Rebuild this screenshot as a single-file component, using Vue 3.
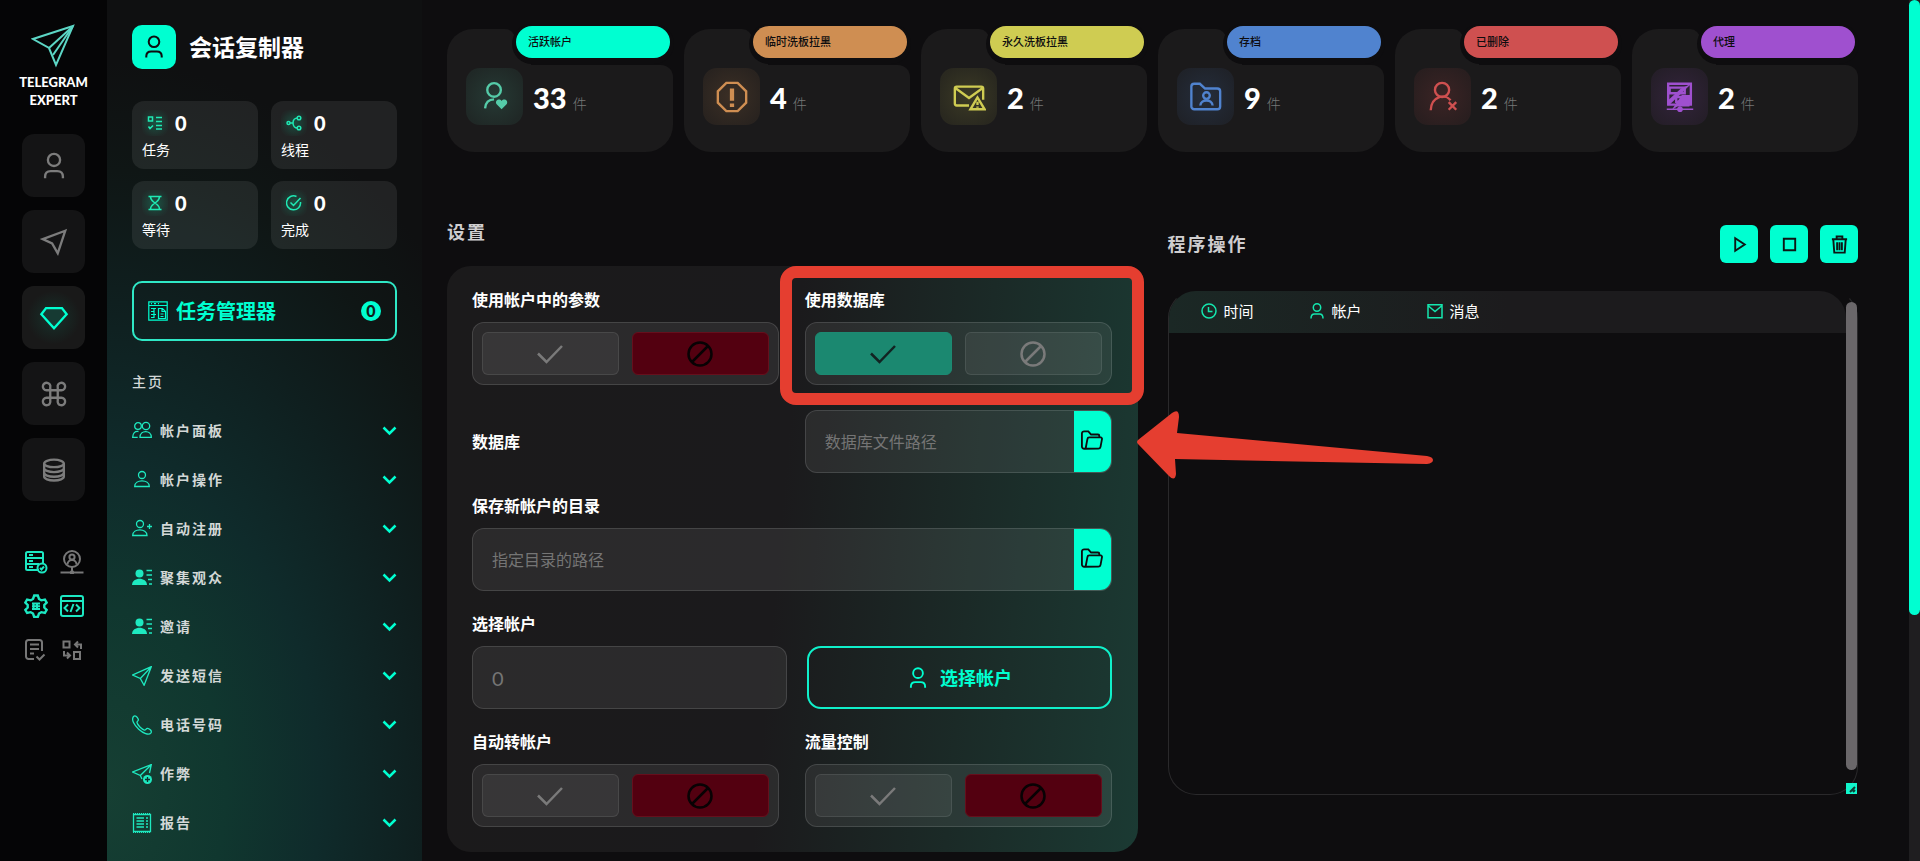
<template>
  <div class="layout">
    <nav class="rail" aria-label="模块">
      <a class="brand" href="#">
        <svg class="brand__logo" viewBox="0 0 44 44" aria-hidden="true" v-html="icons.logo" />
        <span class="brand__name">TELEGRAM<br />EXPERT</span>
      </a>
      <div class="rail__main">
        <button
          v-for="item in railItems"
          :key="item.icon"
          type="button"
          class="rail__btn"
          :class="{ 'rail__btn--active': activeRail === item.icon }"
          :aria-label="item.label"
          @click="activeRail = item.icon"
        >
          <svg viewBox="0 0 32 32" aria-hidden="true" v-html="icons[item.icon]" />
        </button>
      </div>
      <div class="rail__tools">
        <button
          v-for="tool in tools"
          :key="tool.icon"
          type="button"
          class="tool"
          :class="{ 'tool--on': tool.on }"
          :aria-label="tool.label"
        >
          <svg viewBox="0 0 24 24" aria-hidden="true" v-html="icons[tool.icon]" />
        </button>
      </div>
    </nav>

    <aside class="sidebar">
      <header class="sidebar__head">
        <span class="sidebar__icon">
          <svg viewBox="0 0 32 32" aria-hidden="true" v-html="icons.user" />
        </span>
        <h1 class="sidebar__title">会话复制器</h1>
      </header>

      <div class="counters">
        <div v-for="counter in counters" :key="counter.label" class="counter">
          <div class="counter__top">
            <span class="counter__icon">
              <svg viewBox="0 0 16 16" aria-hidden="true" v-html="icons[counter.icon]" />
            </span>
            <span class="counter__value">{{ counter.value }}</span>
          </div>
          <span class="counter__label">{{ counter.label }}</span>
        </div>
      </div>

      <button type="button" class="task-manager">
        <svg viewBox="0 0 20 20" aria-hidden="true" v-html="icons.manager" />
        <span>任务管理器</span>
        <span class="task-manager__badge">0</span>
      </button>

      <a class="home-link" href="#">主页</a>
      <ul class="menu">
        <li v-for="item in menu" :key="item.label">
          <button type="button" class="menu__item">
            <svg class="menu__icon" viewBox="0 0 20 20" aria-hidden="true" v-html="icons[item.icon]" />
            <span>{{ item.label }}</span>
            <svg class="menu__chevron" viewBox="0 0 15 10" aria-hidden="true">
              <path d="M1.500 1.500l6 6 6-6" />
            </svg>
          </button>
        </li>
      </ul>
    </aside>

    <main class="content">
      <section class="stats">
        <article v-for="stat in stats" :key="stat.label" class="stat" :style="{ '--tone': stat.color, '--ink': stat.ink }">
          <span class="stat__label">{{ stat.label }}</span>
          <div class="stat__body">
            <span class="stat__icon">
              <svg viewBox="0 0 36 36" aria-hidden="true" v-html="icons[stat.icon]" />
            </span>
            <p class="stat__text">
              <strong class="stat__value">{{ stat.value }}</strong>
              <span class="stat__unit">件</span>
            </p>
          </div>
        </article>
      </section>

      <div class="columns">
        <section class="settings">
          <h2 class="section-title">设置</h2>
          <form class="card" @submit.prevent>
            <div class="row">
              <div class="field">
                <span class="field__label">使用帐户中的参数</span>
                <div class="switch" role="group" aria-label="使用帐户中的参数">
                  <button type="button" class="switch__btn switch__btn--yes" :class="{ active: form.params }" aria-label="是" :aria-pressed="form.params" @click="form.params = true">
                    <svg viewBox="0 0 28 28" aria-hidden="true" v-html="icons.check" />
                  </button>
                  <button type="button" class="switch__btn switch__btn--no" :class="{ active: !form.params }" aria-label="否" :aria-pressed="!form.params" @click="form.params = false">
                    <svg viewBox="0 0 28 28" aria-hidden="true" v-html="icons.ban" />
                  </button>
                </div>
              </div>
              <div class="field field--marked">
                <span class="field__label">使用数据库</span>
                <div class="switch" role="group" aria-label="使用数据库">
                  <button type="button" class="switch__btn switch__btn--yes" :class="{ active: form.database }" aria-label="是" :aria-pressed="form.database" @click="form.database = true">
                    <svg viewBox="0 0 28 28" aria-hidden="true" v-html="icons.check" />
                  </button>
                  <button type="button" class="switch__btn switch__btn--no" :class="{ active: !form.database }" aria-label="否" :aria-pressed="!form.database" @click="form.database = false">
                    <svg viewBox="0 0 28 28" aria-hidden="true" v-html="icons.ban" />
                  </button>
                </div>
              </div>
            </div>

            <div class="row row--inline">
              <label class="field__label" for="db-path">数据库</label>
              <div class="path">
                <input id="db-path" v-model="form.dbPath" type="text" placeholder="数据库文件路径" />
                <button type="button" aria-label="选择数据库文件">
                  <svg viewBox="0 0 24 24" aria-hidden="true" v-html="icons.open" />
                </button>
              </div>
              <svg class="pointer" viewBox="0 0 302 72" aria-hidden="true">
                <path d="M3 30Q1 32 3 34L34 66Q40 72 41 64L40 49L292 54Q298 53 298 50T292 46L42 23L44 7Q44-2 37 3Z" />
              </svg>
            </div>

            <div class="field">
              <label class="field__label" for="save-path">保存新帐户的目录</label>
              <div class="path">
                <input id="save-path" v-model="form.savePath" type="text" placeholder="指定目录的路径" />
                <button type="button" aria-label="选择目录">
                  <svg viewBox="0 0 24 24" aria-hidden="true" v-html="icons.open" />
                </button>
              </div>
            </div>

            <div class="field">
              <label class="field__label" for="accounts">选择帐户</label>
              <div class="picker">
                <input id="accounts" v-model="form.accounts" class="picker__input" type="text" placeholder="0" />
                <button type="button" class="picker__btn">
                  <svg viewBox="0 0 32 32" aria-hidden="true" v-html="icons.user" />
                  选择帐户
                </button>
              </div>
            </div>

            <div class="row">
              <div class="field">
                <span class="field__label">自动转帐户</span>
                <div class="switch" role="group" aria-label="自动转帐户">
                  <button type="button" class="switch__btn switch__btn--yes" :class="{ active: form.auto }" aria-label="是" :aria-pressed="form.auto" @click="form.auto = true">
                    <svg viewBox="0 0 28 28" aria-hidden="true" v-html="icons.check" />
                  </button>
                  <button type="button" class="switch__btn switch__btn--no" :class="{ active: !form.auto }" aria-label="否" :aria-pressed="!form.auto" @click="form.auto = false">
                    <svg viewBox="0 0 28 28" aria-hidden="true" v-html="icons.ban" />
                  </button>
                </div>
              </div>
              <div class="field">
                <span class="field__label">流量控制</span>
                <div class="switch" role="group" aria-label="流量控制">
                  <button type="button" class="switch__btn switch__btn--yes" :class="{ active: form.flow }" aria-label="是" :aria-pressed="form.flow" @click="form.flow = true">
                    <svg viewBox="0 0 28 28" aria-hidden="true" v-html="icons.check" />
                  </button>
                  <button type="button" class="switch__btn switch__btn--no" :class="{ active: !form.flow }" aria-label="否" :aria-pressed="!form.flow" @click="form.flow = false">
                    <svg viewBox="0 0 28 28" aria-hidden="true" v-html="icons.ban" />
                  </button>
                </div>
              </div>
            </div>
          </form>
        </section>

        <section class="log">
          <header class="log__head">
            <h2 class="section-title">程序操作</h2>
            <div class="log__actions">
              <button v-for="action in actions" :key="action.icon" type="button" :aria-label="action.label">
                <svg viewBox="0 0 20 20" aria-hidden="true" v-html="icons[action.icon]" />
              </button>
            </div>
          </header>
          <div class="log__panel">
            <table class="log__table">
              <thead>
                <tr>
                  <th v-for="col in columns" :key="col.label" scope="col">
                    <span class="log__cell">
                      <svg viewBox="0 0 16 16" aria-hidden="true" v-html="icons[col.icon]" />
                      {{ col.label }}
                    </span>
                  </th>
                </tr>
              </thead>
            </table>
            <div class="log__side" aria-hidden="true">
              <div class="log__thumb"></div>
              <svg class="log__grip" viewBox="0 0 11 11">
                <path d="M4 9l5-5M7 9l2-2" />
              </svg>
            </div>
          </div>
        </section>
      </div>
    </main>

    <div class="scrollbar" aria-hidden="true">
      <div class="scrollbar__thumb"></div>
    </div>
  </div>
</template>

<script setup>
import { reactive, ref } from 'vue'

const icons = {
  logo: '<path d="M42 2L2 15l16 9 7 17z"/><path d="M18 24L40 4"/><path d="M42 2L22 31"/>',
  user: '<circle cx="16" cy="9.500" r="6.500"/><path d="M6.500 29v-1.500c0-4 2.500-6 6-6h7c3.500 0 6 2 6 6V29"/>',
  plane: '<path d="M28 4L4 13l10 4.500L20 28z"/>',
  diamond: '<path d="M7.500 5.500h17l5 6.500L16 27 2.500 12z"/>',
  command: '<path d="M12 12h8v8h-8zM12 12V9a4 4 0 1 0-4 3zM20 12V9a4 4 0 1 1 4 3zM12 20v3a4 4 0 1 1-4-3zM20 20v3a4 4 0 1 0 4-3z"/>',
  database: '<ellipse cx="16" cy="9" rx="10.500" ry="4"/><path d="M5.500 9v14c0 2.300 4.500 4.200 10.500 4.200s10.500-1.900 10.500-4.200V9M5.500 14c0 2.300 4.500 4.200 10.500 4.200s10.500-1.900 10.500-4.200M5.500 19c0 2.300 4.500 4.200 10.500 4.200s10.500-1.900 10.500-4.200"/>',
  server: '<path d="M15 20H3.500a1.500 1.500 0 0 1-1.500-1.500v-15A1.500 1.500 0 0 1 3.500 2h14A1.500 1.500 0 0 1 19 3.500V13M2 8h17M2 14h13M5 5h4M5 11h4M5 17h4"/><circle cx="18" cy="18" r="4.500"/><path d="M16 18l1.500 1.500 2.500-3"/>',
  proxyUser: '<circle cx="12" cy="9" r="8"/><circle cx="12" cy="7" r="2.600"/><path d="M7.500 14.500c0-6 9-6 9 0M12 17v5M0.500 22.500h23"/><circle cx="12" cy="22.500" r="1.200"/>',
  gear: '<path stroke-width="2.400" d="M9 5l1.200-3.500h3.600L15 5l2.300 1.300 3.600-.8 1.800 3.100L20.300 11v2.500l2.400 2.400-1.800 3.100-3.600-.8L15 19.500 13.800 23h-3.600L9 19.500l-2.300-1.300-3.600.8-1.800-3.100 2.400-2.400V11L1.300 8.600l1.800-3.100 3.600.8z"/><path d="M8 9.500h8M8 12.200h8M8 15h8M9.500 9v6.500M13 9v6.500"/>',
  code: '<rect x="1" y="2" width="22" height="20" rx="2"/><path d="M1 7h22M8 10.500L4.500 14 8 17.500M16 10.500l3.500 3.500-3.500 3.500M13.500 10l-3 8"/>',
  docCheck: '<path d="M10 21H4.500A2.500 2.500 0 0 1 2 18.500v-14A2.500 2.500 0 0 1 4.500 2h11A2.500 2.500 0 0 1 18 4.500V13M6 6.500h9M6 11h9M6 15.500h4M12.500 18.500l3 3 5-5"/>',
  swap: '<path d="M3.500 3.500h6v6h-6zM14 14h6v7h-6zM15 6.500h6v4.500M18 3.500l-3 3 3 3M4 13v4.500h5.500M7 14.500l3 3-3 3"/>',
  tasks: '<path d="M1.500 2h4v4h-4zM9 2.500h6M9 6.500h6M9 10.500h6M9 14h6M1.500 11.500l1.500 2 3-3"/>',
  threads: '<circle cx="2.500" cy="8" r="1.500"/><circle cx="13" cy="3" r="1.800"/><circle cx="13" cy="13" r="1.800"/><path d="M4 8h3M11.500 3C9 3 7 5 7 8s2 5 4.500 5"/>',
  hourglass: '<path d="M1.500 1.500h13M1.500 14.500h13M3.500 1.500c0 4 2 4.500 4.500 6.500 2.500-2 4.500-2.500 4.500-6.500M3.500 14.500c0-4 2-4.500 4.500-6.500 2.500 2 4.500 2.500 4.500 6.500"/>',
  done: '<path d="M14.500 7a7 7 0 1 1-4-5.500M4.500 7.500L7.500 10.500l7-7.500"/>',
  manager: '<path d="M.8.800h18.400v18.400H.800zM.800 4.500h18.400M3 2.700h1M6 2.700h2M10 2.700h1"/><path d="M3 7.500h5M3 10.500h3M3 13.500h5M3 16.500h3M6 8v9M10.500 7.500h4l3 3v7h-7zM14 7.500v3h3M12.500 13h3M12.500 15.500h3"/>',
  group: '<circle cx="6" cy="5" r="3.300"/><circle cx="14" cy="5" r="3.700"/><path d="M6.500 10.500C3 10 .7 12 .7 16.300h5M8 16.300c0-7.600 11.300-7.600 11.300 0z"/>',
  person: '<circle cx="10" cy="5" r="3.500"/><path d="M2.700 16.500c0-7.500 14.600-7.500 14.600 0z"/>',
  personAdd: '<circle cx="8" cy="5" r="3.500"/><path d="M.7 16.500c0-7.500 14.300-7.500 14.300 0zM15 7.500h5M17.500 5v5"/>',
  audience: '<g class="solid"><circle cx="7.500" cy="5.500" r="4"/><path d="M0 17c0-8.500 15-8.500 15 0z"/></g><path d="M14.500 2.500H20M14.500 7H20M16 11.500h4M17 16h3"/>',
  send: '<path d="M19.300.700L.7 9l7.600 3.500 3.800 6.800zM8.300 12.500l11-11.800"/>',
  phone: '<path d="M1.500 1.500c2-2 4 1 4.800 2.800.5 1.500-1.600 2-1.300 3.200.6 3 5.300 7 7.500 7.600 1.300.3 1.500-2 3.200-1.700 2 .5 4.500 2.400 3.300 4.400C14.500 23.500-3.500 8 1.500 1.500z"/>',
  boost: '<path d="M19.300.700L.7 8l7.600 3.500L10 15M8.300 11.500l11-10.800L17.500 9"/><circle class="solid" cx="15.500" cy="15.500" r="4.500"/><path class="cut" d="M13 15.500h5M15.500 13v5"/>',
  report: '<path d="M1.500 1.500h17v17h-17z"/><path stroke-dasharray="1 1" d="M1 .500h18M1 19.500h18"/><path d="M4.500 5H12M4.500 8H12M4.500 11H12M4.500 14H12M14 5h2M14 8h2M14 11h2M14 14h2"/>',
  userHeart: '<circle cx="17" cy="10.500" r="7.200"/><path d="M7.500 30c.5-6 4-9.500 9.500-9.500"/><path class="solid" d="M25 31l-5.500-5.500c-2-4 3.200-6.500 5.500-3.300 2.300-3.200 7.500-.7 5.500 3.300z"/>',
  octagon: '<path d="M12 3h12l9 9v12l-9 9H12l-9-9V12z"/><path stroke-width="4.500" d="M18 9v13M18 25v3.500"/>',
  mailWarn: '<path d="M18 27H5a2 2 0 0 1-2-2V9a2 2 0 0 1 2-2h26a2 2 0 0 1 2 2v12M3.500 8.500L18 19 32.500 8.500"/><path d="M27 18.500L19.500 31h15zM27 23v3.500M27 28v1.500"/>',
  folderUser: '<path d="M2.500 28V7a3 3 0 0 1 3-3h6l5.500 5h13a3 3 0 0 1 3 3v16a3 3 0 0 1-3 3H5.500a3 3 0 0 1-3-3z"/><circle cx="18.500" cy="16.500" r="3.500"/><path d="M12 27c.5-7 12.500-7 13 0"/>',
  userX: '<circle cx="17" cy="10.500" r="7.500"/><path d="M5 32c.5-15 15-18 21-10.500M24 23.500l8 8M32 23.500l-8 8"/>',
  proxy: '<path d="M5.500 4h24v22h-24z"/><path d="M7 8h16v6H7zM14 18h14v5H14z"/><path class="solid" d="M30 4L6 27v-6l13-12zM20 16h10l-2 12H15l-6 4z"/><path d="M4 31h28M18 28v5" stroke-width="1.500"/><circle class="solid" cx="18" cy="31" r="3"/>',
  check: '<path d="M2 13.500L10.500 22 26 6"/>',
  ban: '<circle cx="14" cy="14" r="11.500"/><path d="M6 22L22 6"/>',
  open: '<path d="M5 21.500H3.500A2.500 2.500 0 0 1 1 19V5a2.500 2.500 0 0 1 2.500-2.500H8L11 6h7.500A1.500 1.500 0 0 1 20 7.500V9M5 21.500L7 11a2 2 0 0 1 2-1.800h12.500a1.500 1.500 0 0 1 1.400 1.800l-1.600 8.500a2.500 2.500 0 0 1-2.400 2z"/>',
  play: '<path d="M5.500 3.500v13L15.500 10z"/>',
  stop: '<path d="M4 4h12v12H4z"/>',
  trash: '<path d="M2 4.500h16M7 4V1.500h6V4M3.500 5l1 13.500h11l1-13.500M7.500 7.500v8.500M10 7.500v8.500M12.500 7.500v8.500"/>',
  clock: '<circle cx="8" cy="8" r="7"/><path d="M7.500 4v4.500h4"/>',
  account: '<circle cx="8" cy="4.500" r="3.700"/><path d="M2 15.500c0-3.500 1.500-4.500 3.500-4.500h5c2 0 3.500 1 3.500 4.500"/>',
  mail: '<path d="M1 1.800h14v13H1zM1.500 3L8 8.500 14.500 3"/>',
}

const activeRail = ref('diamond')
const railItems = [
  { icon: 'user', label: '帐户' },
  { icon: 'plane', label: '发送' },
  { icon: 'diamond', label: '高级' },
  { icon: 'command', label: '命令' },
  { icon: 'database', label: '数据' },
]

const tools = [
  { icon: 'server', label: '服务器', on: true },
  { icon: 'proxyUser', label: '代理', on: false },
  { icon: 'gear', label: '参数', on: true },
  { icon: 'code', label: '代码', on: true },
  { icon: 'docCheck', label: '文档', on: false },
  { icon: 'swap', label: '转换', on: false },
]

const counters = [
  { icon: 'tasks', value: 0, label: '任务' },
  { icon: 'threads', value: 0, label: '线程' },
  { icon: 'hourglass', value: 0, label: '等待' },
  { icon: 'done', value: 0, label: '完成' },
]

const menu = [
  { icon: 'group', label: '帐户面板' },
  { icon: 'person', label: '帐户操作' },
  { icon: 'personAdd', label: '自动注册' },
  { icon: 'audience', label: '聚集观众' },
  { icon: 'audience', label: '邀请' },
  { icon: 'send', label: '发送短信' },
  { icon: 'phone', label: '电话号码' },
  { icon: 'boost', label: '作弊' },
  { icon: 'report', label: '报告' },
]

const stats = [
  { icon: 'userHeart', value: 33, label: '活跃帐户', color: '#00ffd1', ink: '#55cba8' },
  { icon: 'octagon', value: 4, label: '临时洗板拉黑', color: '#cf8e52', ink: '#cf8e52' },
  { icon: 'mailWarn', value: 2, label: '永久洗板拉黑', color: '#cfcc52', ink: '#cfcc52' },
  { icon: 'folderUser', value: 9, label: '存档', color: '#5083cf', ink: '#5083cf' },
  { icon: 'userX', value: 2, label: '已删除', color: '#cf5050', ink: '#cf5050' },
  { icon: 'proxy', value: 2, label: '代理', color: '#9f50cf', ink: '#9f50cf' },
]

const actions = [
  { icon: 'play', label: '开始' },
  { icon: 'stop', label: '停止' },
  { icon: 'trash', label: '清空' },
]

const columns = [
  { icon: 'clock', label: '时间' },
  { icon: 'account', label: '帐户' },
  { icon: 'mail', label: '消息' },
]

const form = reactive({
  params: false,
  database: true,
  dbPath: '',
  savePath: '',
  accounts: '',
  auto: false,
  flow: false,
})
</script>

<style>
body {
  margin: 0;
  background: #0e0d0f;
}
</style>

<style scoped>
.layout {
  --accent: #00ffd1;
  --bg: #0e0d0f;
  display: flex;
  height: 100vh;
  overflow: hidden;
  background: var(--bg);
  color: #fff;
  font-family: Lato, 'Noto Sans CJK SC', sans-serif;
  font-size: 16px;
  line-height: 22px;
}
.layout *,
.layout *::before,
.layout *::after {
  box-sizing: border-box;
}
button {
  margin: 0;
  padding: 0;
  border: none;
  background: none;
  color: inherit;
  font: inherit;
  cursor: pointer;
}
input {
  min-width: 0;
  font: inherit;
}
a {
  color: inherit;
  text-decoration: none;
}
svg {
  display: block;
  flex: none;
  fill: none;
  stroke: currentColor;
  stroke-width: 2;
}
svg :deep(.solid) {
  fill: currentColor;
  stroke: none;
}
svg :deep(.cut) {
  stroke: #10302c;
}

/* Rail */
.rail {
  flex: 0 0 107px;
  display: flex;
  flex-direction: column;
  align-items: center;
  padding-top: 24px;
  background: #050506;
}
.brand {
  display: flex;
  flex-direction: column;
  align-items: center;
  gap: 5px;
  text-align: center;
}
.brand__logo {
  width: 44px;
  height: 44px;
  color: #5cd6c5;
}
.brand__name {
  font-size: 13px;
  line-height: 18px;
  font-weight: 900;
}
.rail__main {
  display: flex;
  flex-direction: column;
  gap: 13px;
  margin-top: 25px;
}
.rail__btn {
  display: grid;
  place-items: center;
  width: 63px;
  height: 63px;
  border-radius: 12px;
  background: #141415;
  color: #7c7c7c;
}
.rail__btn svg {
  width: 30px;
  height: 30px;
  stroke-width: 2.5;
}
.rail__btn--active {
  background: radial-gradient(circle, #17312b 0%, #191919 60%);
  color: var(--accent);
}
.rail__btn--active svg {
  fill: #163a33;
}
.rail__tools {
  display: grid;
  grid-template-columns: 24px 24px;
  gap: 20px 12px;
  margin-top: 49px;
}
.tool {
  color: #777;
}
.tool svg {
  width: 24px;
  height: 24px;
}
.tool--on {
  color: #1ce8c2;
}

/* Sidebar */
.sidebar {
  flex: 0 0 315px;
  padding: 25px 25px 0;
  background: radial-gradient(ellipse 150% 85% at 0% 92%, #163f33 0%, #10372f 25%, #0f2b2b 45%, #0f1f1f 67%, #0f1615 85%, #0f1011 100%);
}
.sidebar__head {
  display: flex;
  align-items: center;
  gap: 13px;
}
.sidebar__icon {
  display: grid;
  place-items: center;
  width: 44px;
  height: 44px;
  border-radius: 10px;
  background: var(--accent);
  color: #0e0d0f;
}
.sidebar__icon svg {
  width: 26px;
  height: 26px;
  stroke-width: 2.5;
}
.sidebar__title {
  margin: 0;
  font-size: 23px;
  line-height: 32px;
  font-weight: 700;
}
.counters {
  display: grid;
  grid-template-columns: 1fr 1fr;
  gap: 12px 13px;
  margin-top: 32px;
}
.counter {
  height: 68px;
  padding: 9px 10px;
  border-radius: 12px;
  background: rgba(255, 255, 255, 0.08);
}
.counter__top {
  display: flex;
  align-items: center;
  gap: 7px;
}
.counter__icon {
  display: grid;
  place-items: center;
  width: 26px;
  height: 26px;
  border-radius: 8px;
  background: radial-gradient(circle, rgba(0, 255, 180, 0.2), rgba(0, 255, 180, 0.02) 75%);
  color: #1fe9b4;
}
.counter__icon svg {
  width: 16px;
  height: 16px;
  stroke-width: 1.5;
}
.counter__value {
  font-size: 20px;
  font-weight: 900;
}
.counter__label {
  display: block;
  margin-top: 4px;
  font-size: 14px;
  line-height: 20px;
}
.task-manager {
  display: flex;
  align-items: center;
  gap: 8px;
  width: 100%;
  height: 60px;
  margin-top: 32px;
  padding: 0 14px;
  border: 2px solid #2fe8c6;
  border-radius: 10px;
  color: var(--accent);
  font-size: 20px;
  font-weight: 700;
}
.task-manager svg {
  width: 20px;
  height: 20px;
  stroke-width: 1.2;
}
.task-manager__badge {
  width: 20px;
  height: 20px;
  margin-left: auto;
  border-radius: 50%;
  background: var(--accent);
  color: #0f1f1c;
  font-size: 16px;
  line-height: 20px;
  font-weight: 900;
}
.home-link {
  display: block;
  margin-top: 30px;
  color: #d3d8d7;
  font-size: 14px;
  font-weight: 500;
  letter-spacing: 2px;
}
.menu {
  display: flex;
  flex-direction: column;
  margin: 13px 0 0;
  padding: 0;
  list-style: none;
}
.menu__item {
  display: flex;
  align-items: center;
  gap: 8px;
  width: 100%;
  height: 49px;
  color: #d3d8d7;
  font-size: 14px;
  font-weight: 700;
  letter-spacing: 2px;
}
.menu__icon {
  width: 20px;
  height: 20px;
  color: #1ee9c0;
  stroke-width: 1.3;
}
.menu__chevron {
  width: 15px;
  height: 10px;
  margin-left: auto;
  color: var(--accent);
  stroke-width: 2.5;
}

/* Stats */
.content {
  flex: 1;
  min-width: 0;
  padding: 29px 51px 0 25px;
}
.stats {
  display: grid;
  grid-template-columns: repeat(6, 1fr);
  gap: 11px;
}
.stat {
  position: relative;
  padding-top: 36px;
}
.stat::before {
  content: '';
  position: absolute;
  top: 0;
  left: 0;
  width: 68px;
  height: 36px;
  border-radius: 26px 10px 0 0;
  background: #1b1a1b;
}
.stat::after {
  content: '';
  position: absolute;
  top: 22px;
  left: 66px;
  width: 18px;
  height: 14px;
  background: #1b1a1b;
}
.stat__label {
  position: absolute;
  z-index: 1;
  top: -3px;
  right: 3px;
  left: 69px;
  height: 32px;
  padding-left: 12px;
  border-radius: 16px;
  background: var(--tone);
  box-shadow: 0 2px 0 4px var(--bg);
  color: #0e0d0f;
  font-size: 11px;
  line-height: 32px;
  font-weight: 500;
}
.stat__body {
  display: flex;
  gap: 10px;
  height: 87px;
  padding: 3px 19px 0;
  border-radius: 0 12px 27px 27px;
  background: #1b1a1b;
}
.stat__icon {
  display: grid;
  place-items: center;
  width: 57px;
  height: 57px;
  border-radius: 14px;
  background: radial-gradient(circle, color-mix(in srgb, var(--ink) 18%, #1b1a1b), color-mix(in srgb, var(--ink) 8%, #1b1a1b) 80%);
  color: var(--ink);
}
.stat__icon svg {
  width: 34px;
  height: 34px;
  stroke-width: 2.5;
}
.stat__text {
  display: flex;
  align-items: baseline;
  gap: 6px;
  margin: 12px 0 0;
}
.stat__value {
  font-size: 29px;
  line-height: 36px;
  font-weight: 900;
}
.stat__unit {
  color: #777;
  font-size: 14px;
  font-weight: 300;
}

/* Columns */
.columns {
  display: grid;
  grid-template-columns: 1fr 1fr;
  align-items: start;
  gap: 30px;
  margin-top: 68px;
}
.section-title {
  margin: 0;
  color: #cfcdcf;
  font-size: 18px;
  line-height: 24px;
  font-weight: 700;
  letter-spacing: 2px;
}

/* Settings */
.card {
  display: flex;
  flex-direction: column;
  gap: 22px;
  margin-top: 22px;
  padding: 23px 26px 25px 25px;
  border-radius: 24px;
  background: linear-gradient(95deg, #1b1a1b 0%, #1b1a1c 48%, #1b2a27 74%, #1b3a33 100%);
}
.row {
  position: relative;
  display: grid;
  grid-template-columns: 1fr 1fr;
  gap: 26px;
}
.row--inline {
  align-items: center;
  margin-top: 3px;
}
.field {
  position: relative;
  display: flex;
  flex-direction: column;
  gap: 11px;
}
.field__label {
  font-size: 16px;
  line-height: 22px;
  font-weight: 700;
}
.field--marked::after {
  content: '';
  position: absolute;
  z-index: 2;
  inset: -23px -32px -20px -25px;
  border: 12px solid #e53e30;
  border-radius: 16px;
  pointer-events: none;
}
.switch {
  display: grid;
  grid-template-columns: 1fr 1fr;
  gap: 13px;
  height: 63px;
  padding: 9px;
  border: 1px solid rgba(255, 255, 255, 0.13);
  border-radius: 12px;
  background: rgba(255, 255, 255, 0.07);
}
.switch__btn {
  display: grid;
  place-items: center;
  border: 1px solid rgba(255, 255, 255, 0.09);
  border-radius: 6px;
  background: rgba(255, 255, 255, 0.06);
  color: #7a7a7a;
}
.switch__btn svg {
  width: 28px;
  height: 28px;
  stroke-width: 2.5;
}
.switch__btn--yes.active {
  border-color: #1c8a72;
  background: #1b8870;
  color: #122322;
}
.switch__btn--no.active {
  border-color: #660f1c;
  background: #530010;
  color: #080204;
}
.path {
  display: flex;
  height: 63px;
  border: 1px solid rgba(255, 255, 255, 0.13);
  border-radius: 12px;
  background: rgba(255, 255, 255, 0.07);
  overflow: hidden;
}
.path input {
  flex: 1;
  padding: 0 19px;
  border: none;
  background: none;
  color: #fff;
}
.path button {
  display: grid;
  place-items: center;
  flex: 0 0 37px;
  padding-bottom: 4px;
  background: var(--accent);
  color: #0e0d0f;
}
.path button svg {
  width: 22px;
  height: 22px;
}
input::placeholder {
  color: #757575;
  opacity: 1;
}
.picker {
  display: grid;
  grid-template-columns: 315fr 305fr;
  gap: 20px;
}
.picker__input {
  height: 63px;
  padding: 0 19px;
  border: 1px solid rgba(255, 255, 255, 0.13);
  border-radius: 12px;
  background: rgba(255, 255, 255, 0.07);
  color: #fff;
  font-size: 20px;
}
.picker__btn {
  display: flex;
  align-items: center;
  justify-content: center;
  gap: 10px;
  height: 63px;
  border: 2px solid #10f0ca;
  border-radius: 14px;
  color: var(--accent);
  font-size: 18px;
  font-weight: 700;
}
.picker__btn svg {
  width: 24px;
  height: 24px;
  stroke-width: 2.5;
}
.pointer {
  position: absolute;
  z-index: 3;
  top: 0;
  left: calc(100% + 23px);
  width: 302px;
  height: 72px;
  fill: #e53e30;
  stroke: none;
  pointer-events: none;
}

/* Log */
.log {
  margin-top: 5px;
}
.log__head {
  display: flex;
  align-items: center;
  justify-content: space-between;
}
.log__actions {
  display: flex;
  gap: 12px;
}
.log__actions button {
  display: grid;
  place-items: center;
  width: 38px;
  height: 38px;
  border-radius: 6px;
  background: var(--accent);
  color: #0d1614;
}
.log__actions svg {
  width: 19px;
  height: 19px;
}
.log__panel {
  display: flex;
  height: 505px;
  margin-top: 27px;
  border: 1px solid #2a292b;
  border-top-color: transparent;
  border-radius: 28px;
}
.log__table {
  flex: 1;
  height: 42px;
  padding-left: 32px;
  border-spacing: 0;
  table-layout: fixed;
  border-radius: 27px 27px 0 0;
  background: linear-gradient(90deg, #1b2825 0%, #1c1b1d 50%);
}
.log__table th {
  padding: 0 0 3px;
  text-align: left;
}
.log__table th:nth-child(1) {
  width: 108px;
}
.log__table th:nth-child(2) {
  width: 118px;
}
.log__cell {
  display: flex;
  align-items: center;
  gap: 7px;
  font-size: 15px;
  font-weight: 400;
}
.log__cell svg {
  width: 16px;
  height: 16px;
  color: #14e6ae;
  stroke-width: 1.5;
}
.log__side {
  display: flex;
  flex-direction: column;
  justify-content: space-between;
  width: 11px;
  padding-top: 11px;
}
.log__thumb {
  height: 468px;
  border-radius: 6px;
  background: #6a676a;
}
.log__grip {
  width: 11px;
  height: 11px;
  background: #10f5cb;
  color: #0e3b33;
}

.scrollbar {
  flex: 0 0 11px;
  background: #1f1e20;
}
.scrollbar__thumb {
  height: 71.4%;
  border-radius: 6px;
  background: var(--accent);
}
</style>
